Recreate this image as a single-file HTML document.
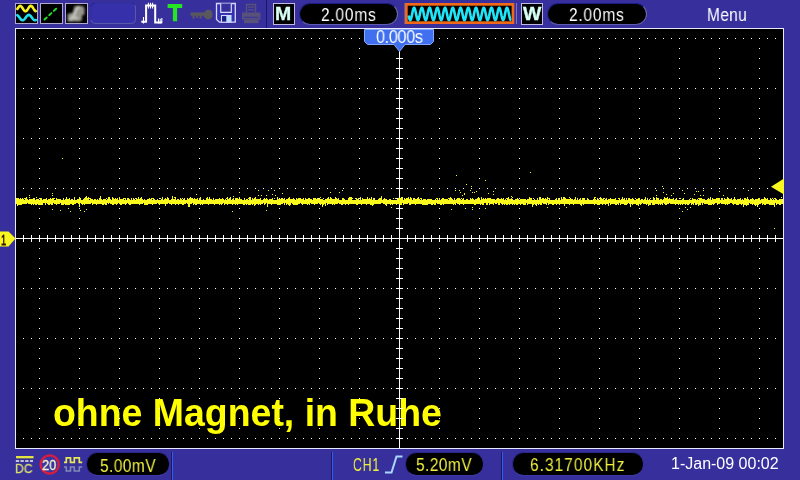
<!DOCTYPE html>
<html><head><meta charset="utf-8"><title>Scope</title>
<style>
html,body{margin:0;padding:0}
body{width:800px;height:480px;background:#37309c;overflow:hidden;position:relative;font-family:"Liberation Sans",sans-serif}
svg{position:absolute;left:0;top:0}
.t{position:absolute;white-space:nowrap;line-height:1;transform-origin:0 0;will-change:transform}
.pill{position:absolute;box-sizing:border-box;background:#000;border-radius:11.5px;border:1px solid;border-color:#1c1c88 #6c6cb0 #5c5cb0 #24248c}
</style></head><body>
<div style="position:absolute;left:15px;top:28px;width:769px;height:421px;background:#000"></div>
<div class="t" id="tnote" style="left:53.0px;top:394.4px;font-size:37.45px;font-weight:bold;color:#ffff00;transform:scaleY(1.036)">ohne Magnet, in Ruhe</div>
<svg width="800" height="480" viewBox="0 0 800 480" shape-rendering="crispEdges">
<rect x="15.5" y="28.5" width="768" height="420" fill="none" stroke="#e8e8ff"/>
<g stroke="#fff" stroke-width="1" fill="none">
<path d="M23 38.5H776" stroke-dasharray="1 7"/>
<path d="M23 88.5H776" stroke-dasharray="1 7"/>
<path d="M23 138.5H776" stroke-dasharray="1 7"/>
<path d="M23 188.5H776" stroke-dasharray="1 7"/>
<path d="M23 288.5H776" stroke-dasharray="1 7"/>
<path d="M23 338.5H776" stroke-dasharray="1 7"/>
<path d="M23 388.5H776" stroke-dasharray="1 7"/>
<path d="M23 438.5H776" stroke-dasharray="1 7"/>
<path d="M39.5 38V439" stroke-dasharray="1 9"/>
<path d="M79.5 38V439" stroke-dasharray="1 9"/>
<path d="M119.5 38V439" stroke-dasharray="1 9"/>
<path d="M159.5 38V439" stroke-dasharray="1 9"/>
<path d="M199.5 38V439" stroke-dasharray="1 9"/>
<path d="M239.5 38V439" stroke-dasharray="1 9"/>
<path d="M279.5 38V439" stroke-dasharray="1 9"/>
<path d="M319.5 38V439" stroke-dasharray="1 9"/>
<path d="M359.5 38V439" stroke-dasharray="1 9"/>
<path d="M439.5 38V439" stroke-dasharray="1 9"/>
<path d="M479.5 38V439" stroke-dasharray="1 9"/>
<path d="M519.5 38V439" stroke-dasharray="1 9"/>
<path d="M559.5 38V439" stroke-dasharray="1 9"/>
<path d="M599.5 38V439" stroke-dasharray="1 9"/>
<path d="M639.5 38V439" stroke-dasharray="1 9"/>
<path d="M679.5 38V439" stroke-dasharray="1 9"/>
<path d="M719.5 38V439" stroke-dasharray="1 9"/>
<path d="M759.5 38V439" stroke-dasharray="1 9"/>
<path d="M16 238.5H783M399.5 51V448"/>
<path d="M23.5 235v7M31.5 235v7M39.5 235v7M47.5 235v7M55.5 235v7M63.5 235v7M71.5 235v7M79.5 235v7M87.5 235v7M95.5 235v7M103.5 235v7M111.5 235v7M119.5 235v7M127.5 235v7M135.5 235v7M143.5 235v7M151.5 235v7M159.5 235v7M167.5 235v7M175.5 235v7M183.5 235v7M191.5 235v7M199.5 235v7M207.5 235v7M215.5 235v7M223.5 235v7M231.5 235v7M239.5 235v7M247.5 235v7M255.5 235v7M263.5 235v7M271.5 235v7M279.5 235v7M287.5 235v7M295.5 235v7M303.5 235v7M311.5 235v7M319.5 235v7M327.5 235v7M335.5 235v7M343.5 235v7M351.5 235v7M359.5 235v7M367.5 235v7M375.5 235v7M383.5 235v7M391.5 235v7M399.5 235v7M407.5 235v7M415.5 235v7M423.5 235v7M431.5 235v7M439.5 235v7M447.5 235v7M455.5 235v7M463.5 235v7M471.5 235v7M479.5 235v7M487.5 235v7M495.5 235v7M503.5 235v7M511.5 235v7M519.5 235v7M527.5 235v7M535.5 235v7M543.5 235v7M551.5 235v7M559.5 235v7M567.5 235v7M575.5 235v7M583.5 235v7M591.5 235v7M599.5 235v7M607.5 235v7M615.5 235v7M623.5 235v7M631.5 235v7M639.5 235v7M647.5 235v7M655.5 235v7M663.5 235v7M671.5 235v7M679.5 235v7M687.5 235v7M695.5 235v7M703.5 235v7M711.5 235v7M719.5 235v7M727.5 235v7M735.5 235v7M743.5 235v7M751.5 235v7M759.5 235v7M767.5 235v7M775.5 235v7M396 58.5h7M396 68.5h7M396 78.5h7M396 88.5h7M396 98.5h7M396 108.5h7M396 118.5h7M396 128.5h7M396 138.5h7M396 148.5h7M396 158.5h7M396 168.5h7M396 178.5h7M396 188.5h7M396 198.5h7M396 208.5h7M396 218.5h7M396 228.5h7M396 238.5h7M396 248.5h7M396 258.5h7M396 268.5h7M396 278.5h7M396 288.5h7M396 298.5h7M396 308.5h7M396 318.5h7M396 328.5h7M396 338.5h7M396 348.5h7M396 358.5h7M396 368.5h7M396 378.5h7M396 388.5h7M396 398.5h7M396 408.5h7M396 418.5h7M396 428.5h7M396 438.5h7"/>
</g>
<path d="M16.5 198V204M17.5 198V206M18.5 198V205M19.5 199V205M20.5 198V205M21.5 199V205M22.5 198V204M23.5 199V204M24.5 198V199M24.5 200V204M25.5 198V204M26.5 197V204M27.5 199V203M28.5 200V204M29.5 197V198M29.5 199V204M30.5 199V204M31.5 199V205M32.5 199V204M33.5 198V205M34.5 198V204M35.5 200V205M36.5 197V198M36.5 199V205M37.5 199V204M38.5 199V205M39.5 200V205M40.5 198V205M41.5 198V205M42.5 200V205M43.5 199V203M44.5 199V203M45.5 199V205M46.5 198V203M47.5 200V204M48.5 199V205M49.5 199V205M50.5 198V204M51.5 199V205M52.5 198V205M53.5 198V203M54.5 198V199M54.5 200V204M55.5 200V204M56.5 198V205M57.5 199V204M58.5 199V204M59.5 199V204M60.5 199V203M61.5 200V205M62.5 200V205M63.5 198V205M64.5 200V204M65.5 199V205M66.5 197V205M67.5 199V205M68.5 199V205M69.5 198V205M70.5 200V204M71.5 199V204M72.5 199V205M73.5 200V205M74.5 197V204M75.5 200V204M76.5 200V203M77.5 199V203M78.5 199V204M79.5 197V207M80.5 198V203M81.5 200V204M82.5 200V205M83.5 199V204M84.5 198V205M85.5 197V204M86.5 196V204M87.5 198V204M88.5 197V204M89.5 198V199M89.5 200V204M90.5 198V204M91.5 199V203M92.5 199V205M93.5 200V204M94.5 199V204M95.5 199V204M96.5 200V205M97.5 199V204M98.5 200V204M99.5 198V204M100.5 196V204M101.5 199V204M102.5 200V205M103.5 199V205M104.5 199V204M105.5 199V205M106.5 198V199M106.5 200V205M107.5 199V203M108.5 197V204M109.5 197V203M110.5 199V204M111.5 200V204M112.5 197V205M113.5 198V205M114.5 199V204M115.5 198V204M116.5 199V205M117.5 198V204M118.5 200V203M119.5 197V204M120.5 199V205M121.5 199V205M122.5 199V204M123.5 198V204M124.5 198V199M124.5 200V204M125.5 198V205M126.5 200V204M127.5 198V203M128.5 198V204M129.5 199V205M130.5 200V205M131.5 198V204M132.5 200V204M133.5 198V204M134.5 199V204M135.5 198V199M135.5 200V204M136.5 198V204M137.5 199V204M138.5 197V204M139.5 199V205M140.5 198V204M141.5 197V204M142.5 199V204M143.5 200V203M144.5 199V205M145.5 200V205M146.5 200V205M147.5 199V205M148.5 199V204M149.5 198V204M150.5 199V204M151.5 198V204M152.5 198V199M152.5 200V205M153.5 198V204M154.5 199V204M155.5 200V204M156.5 200V204M157.5 199V203M158.5 200V204M159.5 200V205M160.5 198V199M160.5 200V204M161.5 199V204M162.5 197V204M163.5 200V204M164.5 199V204M165.5 198V206M166.5 199V204M167.5 197V204M168.5 198V203M169.5 200V204M170.5 200V204M171.5 199V205M172.5 196V204M173.5 199V204M174.5 197V198M174.5 199V204M175.5 197V205M176.5 200V204M177.5 199V204M178.5 199V205M179.5 200V204M180.5 198V204M181.5 199V204M182.5 198V199M182.5 200V205M183.5 199V205M184.5 198V204M185.5 200V204M186.5 200V203M187.5 198V204M188.5 199V207M189.5 198V207M190.5 197V204M191.5 198V204M192.5 198V203M193.5 199V205M194.5 198V204M195.5 199V205M196.5 199V205M197.5 198V204M198.5 200V204M199.5 198V204M200.5 197V205M201.5 200V204M202.5 200V205M203.5 199V204M204.5 200V204M205.5 200V204M206.5 198V204M207.5 197V204M208.5 199V205M209.5 197V204M210.5 199V204M211.5 199V204M212.5 200V204M213.5 198V204M214.5 200V205M215.5 199V204M216.5 199V204M217.5 199V204M218.5 199V204M219.5 198V205M220.5 199V204M221.5 199V205M222.5 198V204M223.5 199V203M224.5 200V205M225.5 199V204M226.5 198V199M226.5 200V204M227.5 197V205M228.5 199V204M229.5 198V204M230.5 197V204M231.5 200V204M232.5 199V205M233.5 196V197M233.5 198V204M234.5 200V204M235.5 198V205M236.5 198V204M237.5 198V205M238.5 199V204M239.5 197V204M240.5 199V204M241.5 199V204M242.5 200V204M243.5 200V205M244.5 198V205M245.5 200V204M246.5 199V205M247.5 199V204M248.5 198V199M248.5 200V205M249.5 197V205M250.5 197V205M251.5 200V204M252.5 198V205M253.5 199V204M254.5 198V206M255.5 197V205M256.5 199V204M257.5 199V204M258.5 199V205M259.5 199V204M260.5 198V205M261.5 200V204M262.5 200V204M263.5 199V203M264.5 198V205M265.5 199V204M266.5 198V203M267.5 199V207M268.5 200V204M269.5 199V204M270.5 199V204M271.5 199V205M272.5 198V204M273.5 200V204M274.5 198V199M274.5 200V204M275.5 200V204M276.5 200V204M277.5 197V205M278.5 199V205M279.5 199V205M280.5 199V205M281.5 198V204M282.5 198V204M283.5 199V203M284.5 198V205M285.5 200V203M286.5 199V205M287.5 199V204M288.5 198V205M289.5 197V206M290.5 199V205M291.5 199V203M292.5 199V204M293.5 198V205M294.5 199V205M295.5 200V205M296.5 198V205M297.5 199V205M298.5 198V204M299.5 198V204M300.5 198V203M301.5 199V204M302.5 199V205M303.5 198V204M304.5 200V204M305.5 198V204M306.5 199V204M307.5 199V205M308.5 198V204M309.5 198V205M310.5 199V203M311.5 199V204M312.5 200V204M313.5 198V204M314.5 198V205M315.5 198V204M316.5 199V204M317.5 198V204M318.5 198V203M319.5 199V204M320.5 197V198M320.5 199V205M321.5 199V204M322.5 199V207M323.5 198V199M323.5 200V205M324.5 200V204M325.5 199V206M326.5 199V203M327.5 198V205M328.5 197V204M329.5 199V204M330.5 197V204M331.5 198V204M332.5 199V205M333.5 199V204M334.5 199V205M335.5 197V204M336.5 198V204M337.5 199V204M338.5 198V203M339.5 200V204M340.5 200V204M341.5 200V205M342.5 198V205M343.5 198V204M344.5 199V204M345.5 200V205M346.5 200V204M347.5 200V204M348.5 198V205M349.5 197V204M350.5 197V204M351.5 197V204M352.5 198V199M352.5 200V204M353.5 200V204M354.5 200V204M355.5 198V199M355.5 200V204M356.5 198V205M357.5 199V205M358.5 198V204M359.5 200V204M360.5 197V204M361.5 200V205M362.5 198V204M363.5 199V204M364.5 199V204M365.5 199V204M366.5 199V205M367.5 197V204M368.5 199V204M369.5 198V204M370.5 199V205M371.5 197V205M372.5 200V206M373.5 198V205M374.5 198V204M375.5 200V204M376.5 200V204M377.5 200V204M378.5 199V204M379.5 198V204M380.5 198V204M381.5 196V203M382.5 200V203M383.5 199V204M384.5 198V204M385.5 199V205M386.5 199V206M387.5 200V204M388.5 200V204M389.5 199V204M390.5 199V205M391.5 200V204M392.5 200V205M393.5 198V199M393.5 200V204M394.5 200V204M395.5 198V199M395.5 200V204M396.5 200V205M397.5 199V204M398.5 198V204M399.5 198V204M400.5 198V205M401.5 197V205M402.5 197V203M403.5 200V205M404.5 198V204M405.5 199V204M406.5 198V204M407.5 198V204M408.5 197V203M409.5 199V205M410.5 197V205M411.5 198V204M412.5 200V204M413.5 198V204M414.5 198V204M415.5 199V205M416.5 199V204M417.5 198V204M418.5 197V204M419.5 199V204M420.5 198V199M420.5 200V204M421.5 198V204M422.5 200V205M423.5 199V205M424.5 199V205M425.5 199V205M426.5 200V205M427.5 199V205M428.5 199V204M429.5 199V204M430.5 199V204M431.5 199V205M432.5 200V205M433.5 200V204M434.5 200V205M435.5 199V205M436.5 198V199M436.5 200V203M437.5 198V204M438.5 200V204M439.5 198V204M440.5 200V205M441.5 199V205M442.5 198V204M443.5 198V205M444.5 199V204M445.5 199V204M446.5 199V204M447.5 199V204M448.5 198V199M448.5 200V204M449.5 198V204M450.5 197V204M451.5 198V204M452.5 199V204M453.5 200V205M454.5 198V204M455.5 200V205M456.5 199V203M457.5 198V204M458.5 198V204M459.5 198V205M460.5 199V204M461.5 198V199M461.5 200V204M462.5 199V204M463.5 198V205M464.5 200V204M465.5 200V204M466.5 199V204M467.5 199V204M468.5 200V204M469.5 200V204M470.5 198V204M471.5 199V204M472.5 198V204M473.5 199V204M474.5 200V205M475.5 199V205M476.5 199V204M477.5 198V204M478.5 197V204M479.5 198V204M480.5 200V205M481.5 197V204M482.5 199V205M483.5 198V205M484.5 199V203M485.5 198V203M486.5 199V205M487.5 198V205M488.5 198V203M489.5 198V205M490.5 198V204M491.5 199V204M492.5 199V204M493.5 199V205M494.5 199V203M495.5 200V204M496.5 199V204M497.5 198V203M498.5 198V205M499.5 199V205M500.5 199V203M501.5 198V204M502.5 199V205M503.5 198V204M504.5 200V205M505.5 199V204M506.5 198V199M506.5 200V205M507.5 198V205M508.5 197V204M509.5 199V205M510.5 199V204M511.5 196V197M511.5 198V204M512.5 197V198M512.5 199V205M513.5 200V204M514.5 200V205M515.5 199V204M516.5 199V205M517.5 198V205M518.5 199V204M519.5 200V204M520.5 199V205M521.5 199V204M522.5 199V204M523.5 199V205M524.5 199V205M525.5 199V205M526.5 200V203M527.5 199V205M528.5 199V204M529.5 197V204M530.5 198V204M531.5 198V204M532.5 200V207M533.5 198V199M533.5 200V205M534.5 199V204M535.5 200V205M536.5 200V206M537.5 198V204M538.5 200V205M539.5 197V204M540.5 197V205M541.5 199V205M542.5 198V203M543.5 198V204M544.5 199V204M545.5 198V204M546.5 199V205M547.5 197V203M548.5 198V199M548.5 200V205M549.5 198V204M550.5 200V204M551.5 200V204M552.5 200V205M553.5 200V205M554.5 200V204M555.5 199V204M556.5 198V205M557.5 200V204M558.5 198V204M559.5 199V205M560.5 200V204M561.5 197V204M562.5 199V204M563.5 197V204M564.5 197V206M565.5 198V204M566.5 199V204M567.5 199V204M568.5 199V204M569.5 197V198M569.5 199V205M570.5 198V204M571.5 199V204M572.5 199V204M573.5 200V205M574.5 199V204M575.5 197V204M576.5 200V204M577.5 198V204M578.5 200V204M579.5 199V204M580.5 198V205M581.5 200V206M582.5 198V204M583.5 198V205M584.5 198V204M585.5 200V204M586.5 200V204M587.5 198V204M588.5 199V204M589.5 200V204M590.5 200V204M591.5 200V204M592.5 200V204M593.5 199V204M594.5 197V205M595.5 197V198M595.5 199V204M596.5 200V204M597.5 198V205M598.5 199V205M599.5 200V205M600.5 197V204M601.5 198V204M602.5 199V205M603.5 198V204M604.5 198V199M604.5 200V204M605.5 199V205M606.5 198V204M607.5 200V204M608.5 199V206M609.5 199V203M610.5 198V205M611.5 199V204M612.5 199V204M613.5 199V204M614.5 199V204M615.5 198V205M616.5 200V205M617.5 200V204M618.5 198V199M618.5 200V205M619.5 198V203M620.5 200V205M621.5 199V204M622.5 197V204M623.5 199V204M624.5 198V205M625.5 200V205M626.5 198V205M627.5 200V204M628.5 198V203M629.5 198V204M630.5 199V207M631.5 199V204M632.5 198V205M633.5 199V204M634.5 200V204M635.5 198V199M635.5 200V204M636.5 199V205M637.5 199V205M638.5 198V206M639.5 198V204M640.5 200V205M641.5 199V204M642.5 199V203M643.5 200V204M644.5 199V204M645.5 197V204M646.5 200V205M647.5 198V204M648.5 200V206M649.5 199V205M650.5 198V199M650.5 200V205M651.5 200V203M652.5 200V205M653.5 197V205M654.5 198V205M655.5 200V204M656.5 197V204M657.5 198V204M658.5 198V205M659.5 200V204M660.5 199V205M661.5 199V204M662.5 200V205M663.5 199V203M664.5 197V204M665.5 198V205M666.5 198V205M667.5 197V204M668.5 199V204M669.5 198V203M670.5 199V204M671.5 199V204M672.5 199V204M673.5 198V204M674.5 200V204M675.5 199V205M676.5 198V204M677.5 200V204M678.5 200V205M679.5 200V204M680.5 198V199M680.5 200V205M681.5 200V204M682.5 199V205M683.5 198V204M684.5 200V204M685.5 200V205M686.5 200V204M687.5 200V205M688.5 200V205M689.5 199V204M690.5 198V199M690.5 200V203M691.5 200V205M692.5 198V204M693.5 199V205M694.5 199V203M695.5 199V205M696.5 200V205M697.5 199V204M698.5 198V199M698.5 200V206M699.5 198V205M700.5 198V205M701.5 198V203M702.5 199V205M703.5 199V203M704.5 199V204M705.5 200V204M706.5 200V204M707.5 199V204M708.5 198V205M709.5 199V205M710.5 197V205M711.5 200V205M712.5 198V204M713.5 199V205M714.5 199V204M715.5 199V203M716.5 198V203M717.5 198V205M718.5 198V204M719.5 198V204M720.5 200V203M721.5 198V204M722.5 198V204M723.5 200V204M724.5 198V204M725.5 199V205M726.5 199V204M727.5 197V205M728.5 198V204M729.5 199V204M730.5 199V203M731.5 198V203M732.5 200V204M733.5 199V205M734.5 197V204M735.5 199V204M736.5 200V205M737.5 199V205M738.5 199V205M739.5 199V204M740.5 198V204M741.5 200V205M742.5 199V204M743.5 200V207M744.5 198V205M745.5 198V205M746.5 199V206M747.5 197V205M748.5 199V205M749.5 200V203M750.5 199V204M751.5 199V204M752.5 198V205M753.5 199V204M754.5 200V205M755.5 199V206M756.5 199V205M757.5 199V207M758.5 198V205M759.5 198V204M760.5 200V204M761.5 199V203M762.5 199V205M763.5 199V204M764.5 197V205M765.5 198V205M766.5 199V204M767.5 198V204M768.5 200V204M769.5 200V205M770.5 198V205M771.5 199V205M772.5 198V199M772.5 200V205M773.5 199V205M774.5 198V199M774.5 200V207M775.5 198V203M776.5 199V205M777.5 200V204M778.5 200V204M779.5 199V205M780.5 199V205M781.5 197V198M781.5 199V204M782.5 199V204M258.5 195v1M275.5 195v1M261.5 195v1M268.5 190v1M274.5 190v1M272.5 194v1M266.5 195v1M258.5 190v1M470.5 190v1M460.5 192v1M472.5 192v1M474.5 192v1M464.5 193v1M493.5 194v1M476.5 191v1M455.5 190v1M459.5 190v1M462.5 195v1M493.5 191v1M488.5 193v1M684.5 193v1M694.5 194v1M696.5 191v1M703.5 195v1M703.5 190v1M656.5 190v1M700.5 195v1M656.5 195v1M698.5 191v1M682.5 190v1M666.5 194v1M673.5 193v1M671.5 195v1M663.5 192v1M339.5 192v1M330.5 192v1M342.5 190v1M52.5 193v1M52.5 195v1M80.5 210v1M84.5 211v1M86.5 209v1M68.5 208v1M60.5 210v1M472.5 207v1M465.5 208v1M472.5 209v1M690.5 207v1M687.5 209v1M682.5 211v1M685.5 207v1M52.5 209v1M451.5 209v1M391.5 207v1M566.5 207v1M485.5 208v1M232.5 211v1M70.5 211v1M266.5 210v1M547.5 207v1M679.5 208v1M239.5 192v1M29.5 195v1M282.5 193v1M748.5 190v1M196.5 194v1M464.5 194v1M719.5 191v1M723.5 195v1M62.5 158v1M456.5 175v1M530.5 172v1M485.5 180v1M466.5 184v1M471.5 186v1M774.5 228v1M662.5 186v1" stroke="#f8f81c" stroke-width="1" fill="none"/>
<!-- trigger time marker -->
<g shape-rendering="geometricPrecision">
<path d="M364.5 29.5H433.5V41.5L430.5 44.5H405L399.5 51.5L394 44.5H367.5L364.5 41.5Z" fill="#4070f0" stroke="#88a8ff"/>
<path d="M0 231.5H8.5L15.5 238.5L8.5 246.5H0Z" fill="#f8f820"/>
<path d="M784 178.400V194.600L771 186.700Z" fill="#f8f820"/>
</g>
<!-- top icons -->
<g>
<rect x="15.5" y="3.5" width="22" height="20" fill="#000" stroke="#b0a8d0"/>
<rect x="40.5" y="3.5" width="22" height="20" fill="#000" stroke="#b0a8d0"/>
<rect x="65.5" y="3.5" width="22" height="20" fill="#000" stroke="#b0a8d0"/>
<g shape-rendering="geometricPrecision" fill="none" stroke-width="2.2" stroke-linecap="round">
<path d="M17.3 9.00L17.8 8.20L18.3 7.44L18.8 6.78L19.3 6.28L19.8 5.98L20.3 5.90L20.8 6.07L21.3 6.45L21.8 7.03L22.3 7.74L22.8 8.52L23.3 9.31L23.8 10.04L24.3 10.65L24.8 11.07L25.3 11.28L25.8 11.26L26.3 11.00L26.8 10.54L27.3 9.90L27.8 9.16L28.3 8.36L28.8 7.59L29.3 6.90L29.8 6.36L30.3 6.02L30.8 5.90L31.3 6.02L31.8 6.36L32.3 6.90L32.8 7.59L33.3 8.36L33.8 9.16L34.3 9.90L34.8 10.54L35.3 11.00L35.8 11.26" stroke="#f8f020" stroke-width="2.6"/>
<path d="M17.3 15.18L17.8 15.55L18.3 16.06L18.8 16.66L19.3 17.33L19.8 18.01L20.3 18.66L20.8 19.25L21.3 19.74L21.8 20.08L22.3 20.27L22.8 20.29L23.3 20.13L23.8 19.82L24.3 19.36L24.8 18.79L25.3 18.14L25.8 17.46L26.3 16.79L26.8 16.17L27.3 15.64L27.8 15.24L28.3 14.99L28.8 14.90L29.3 14.99L29.8 15.24L30.3 15.64L30.8 16.17L31.3 16.79L31.8 17.46L32.3 18.14L32.8 18.79L33.3 19.36L33.8 19.82L34.3 20.13L34.8 20.29L35.3 20.27L35.8 20.08" stroke="#20e0f0" stroke-width="2.6"/>
<path d="M44.500 19.500L57.500 7.500" stroke="#20d828" stroke-width="2" stroke-dasharray="3 3.4"/>
</g>
<g shape-rendering="geometricPrecision">
<filter id="bl" x="-20%" y="-20%" width="140%" height="140%"><feGaussianBlur stdDeviation="0.8"/></filter>
<path d="M67.500 21.500V14L73 12.500L74.500 6H83L84.500 8V14.500L82 15.500V20L80 21.500Z" fill="#94948c" filter="url(#bl)"/>
<path d="M70 20L74.500 15L76 10L79.500 6.500M72 18H78" stroke="#d4d4cc" stroke-width="2.200" fill="none" filter="url(#bl)" opacity="0.85"/>
</g>
<rect x="91" y="3" width="44.5" height="20.5" rx="4" fill="#3630aa" stroke="#5a58a8" shape-rendering="geometricPrecision"/><path d="M91 19.5V7Q91 3 95 3H131.500Q134.500 3 135.200 5" fill="none" stroke="#1c1c9a" shape-rendering="geometricPrecision"/>
</g>
<!-- pulse icon -->
<g shape-rendering="geometricPrecision" fill="none" stroke="#fff">
<path d="M141.300 21.800H146.100V5.600H155.200V22.400H162.200" stroke-width="2"/>
<path d="M143.500 17v6.500M148.400 2.800v5.600M150.500 2.800v5.600M152.600 2.800v5.600M158.500 18.500v5M160.200 18.800v4.700M161.800 18v4.500" stroke-width="1.100"/>
</g>
<!-- T -->
<path d="M167.600 4H182.200V8.100H177.100V21.200H172.900V8.100H167.600Z" fill="#24e424" shape-rendering="geometricPrecision"/>
<!-- key -->
<g fill="#5a585c" shape-rendering="geometricPrecision">
<rect x="190.5" y="12.5" width="14" height="3.2"/>
<rect x="192.5" y="15" width="2" height="3.6"/><rect x="196" y="15" width="2" height="3"/><rect x="199.500" y="15" width="2" height="3.600"/>
<path d="M202.500 14L206.500 10Q212.500 9 212.500 14.500Q212.500 20 206.500 19.200L202.500 15.500Z"/>
</g>
<!-- floppy -->
<g shape-rendering="geometricPrecision">
<path d="M216.500 3.500H235.300V22.200H219.500L216.500 19.500Z" fill="#3232b0" stroke="#d8d8ff" stroke-width="1.300"/>
<path d="M220.700 3.500V12.300H231.300V3.500" fill="#37309c" stroke="#d8d8ff" stroke-width="1.200"/>
<rect x="221.500" y="15.500" width="9.500" height="6.700" fill="#1c1c84" stroke="#d8d8ff" stroke-width="1.100"/>
<rect x="226.300" y="16" width="4.700" height="6" fill="#b8e0ff"/>
</g>
<!-- printer -->
<g fill="#58527a" shape-rendering="geometricPrecision">
<path d="M246.500 12.500V4.500H255.500V12.500" fill="none" stroke="#58527a" stroke-width="1.400"/>
<rect x="248" y="6.500" width="6" height="1.200"/><rect x="248" y="9.300" width="6" height="1.200"/>
<rect x="242" y="12.500" width="18.500" height="7"/>
<rect x="244" y="19.500" width="14.500" height="3.700"/>
<rect x="244" y="16.800" width="14.500" height="1" fill="#37309c"/>
</g>
<rect x="266" y="0" width="1" height="28" fill="#18186a"/>
<!-- M box, W box -->
<rect x="273.5" y="3.5" width="21" height="21" fill="#000" stroke="#c0b8e4"/>
<rect x="521.5" y="3.5" width="21" height="21" fill="#000" stroke="#c0b8e4"/>
<!-- orange box -->
<rect x="406.35" y="4.35" width="106.6" height="18.3" fill="#000" stroke="#f06818" stroke-width="2.7" shape-rendering="geometricPrecision"/><rect x="515.5" y="3" width="1" height="21" fill="#7c78b8"/><rect x="404" y="3" width="1" height="21" fill="#5c58a8"/>
<path d="M408.6 15.42L409.1 17.67L409.6 19.31L410.1 20.07L410.6 19.82L411.1 18.62L411.6 16.65L412.1 14.23L412.6 11.76L413.1 9.63L413.6 8.20L414.1 7.70L414.6 8.20L415.1 9.63L415.6 11.76L416.1 14.23L416.6 16.65L417.1 18.62L417.6 19.82L418.1 20.07L418.6 19.31L419.1 17.67L419.6 15.42L420.1 12.92L420.6 10.58L421.1 8.79L421.6 7.82L422.1 7.84L422.6 8.84L423.1 10.67L423.6 13.02L424.1 15.52L424.6 17.75L425.1 19.36L425.6 20.08L426.1 19.79L426.6 18.55L427.1 16.55L427.6 14.13L428.1 11.66L428.6 9.56L429.1 8.16L429.6 7.70L430.1 8.24L430.6 9.71L431.1 11.85L431.6 14.33L432.1 16.73L432.6 18.68L433.1 19.85L433.6 20.05L434.1 19.26L434.6 17.59L435.1 15.32L435.6 12.82L436.1 10.50L436.6 8.73L437.1 7.80L437.6 7.86L438.1 8.90L438.6 10.76L439.1 13.12L439.6 15.61L440.1 17.83L440.6 19.40L441.1 20.08L441.6 19.76L442.1 18.48L442.6 16.46L443.1 14.03L443.6 11.57L444.1 9.49L444.6 8.13L445.1 7.70L445.6 8.29L446.1 9.78L446.6 11.95L447.1 14.43L447.6 16.82L448.1 18.75L448.6 19.88L449.1 20.04L449.6 19.21L450.1 17.51L450.6 15.22L451.1 12.72L451.6 10.42L452.1 8.67L452.6 7.78L453.1 7.88L453.6 8.96L454.1 10.84L454.6 13.22L455.1 15.71L455.6 17.90L456.1 19.45L456.6 20.09L457.1 19.73L457.6 18.42L458.1 16.37L458.6 13.93L459.1 11.48L459.6 9.42L460.1 8.09L460.6 7.71L461.1 8.33L461.6 9.86L462.1 12.04L462.6 14.53L463.1 16.91L463.6 18.81L464.1 19.90L464.6 20.03L465.1 19.15L465.6 17.43L466.1 15.12L466.6 12.63L467.1 10.33L467.6 8.62L468.1 7.77L468.6 7.91L469.1 9.02L469.6 10.93L470.1 13.32L470.6 15.81L471.1 17.98L471.6 19.49L472.1 20.09L472.6 19.69L473.1 18.35L473.6 16.28L474.1 13.82L474.6 11.38L475.1 9.35L475.6 8.06L476.1 7.71L476.6 8.37L477.1 9.93L477.6 12.14L478.1 14.63L478.6 17.00L479.1 18.87L479.6 19.93L480.1 20.01L480.6 19.10L481.1 17.34L481.6 15.03L482.1 12.53L482.6 10.25L483.1 8.57L483.6 7.75L484.1 7.93L484.6 9.09L485.1 11.02L485.6 13.42L486.1 15.90L486.6 18.06L487.1 19.53L487.6 20.10L488.1 19.65L488.6 18.28L489.1 16.19L489.6 13.72L490.1 11.29L490.6 9.28L491.1 8.02L491.6 7.72L492.1 8.42L492.6 10.01L493.1 12.23L493.6 14.73L494.1 17.09L494.6 18.93L495.1 19.95L495.6 19.99L496.1 19.04L496.6 17.26L497.1 14.93L497.6 12.43L498.1 10.17L498.6 8.52L499.1 7.74L499.6 7.96L500.1 9.15L500.6 11.11L501.1 13.52L501.6 16.00L502.1 18.13L502.6 19.58L503.1 20.10L503.6 19.62L504.1 18.20L504.6 16.09L505.1 13.62L505.6 11.20L506.1 9.22L506.6 7.99L507.1 7.73L507.6 8.47L508.1 10.09L508.6 12.33L509.1 14.83L509.6 17.17L510.1 18.99L510.6 19.97L511.1 19.97" fill="none" stroke="#20e4f8" stroke-width="2.6" stroke-linejoin="round" shape-rendering="geometricPrecision"/>
<!-- bottom bar -->
<g>
<rect x="16" y="456" width="17.5" height="2.6" fill="#e4e440" shape-rendering="geometricPrecision"/>
<rect x="16" y="458.6" width="17.5" height="0.8" fill="#282880" shape-rendering="geometricPrecision"/>
<path d="M15.800 461H33" stroke="#f4f4e8" stroke-width="1.3" stroke-dasharray="3.3 1.4" shape-rendering="geometricPrecision"/>
<circle cx="49.7" cy="464.5" r="9.1" fill="#3a34a4" stroke="#dc1c3c" stroke-width="2.4" shape-rendering="geometricPrecision"/>
<path d="M64 462.3H66.300V457.900H70.500V462.300H74.300V457.900H79.300V462.300H82.200" fill="none" stroke="#e8e858" stroke-width="1.7" shape-rendering="geometricPrecision"/>
<path d="M64 467H66.300V471H70.500V467H74.300V471H79.300V467H82.200" fill="none" stroke="#8088b4" stroke-width="1.6" shape-rendering="geometricPrecision"/>
<rect x="171" y="452" width="1" height="28" fill="#18186a"/><rect x="172" y="452" width="1" height="28" fill="#3060f0"/>
<rect x="331" y="452" width="1" height="28" fill="#18186a"/><rect x="332" y="452" width="1" height="28" fill="#3060f0"/>
<rect x="501" y="452" width="1" height="28" fill="#18186a"/><rect x="502" y="452" width="1" height="28" fill="#3060f0"/>
<path d="M385 472.500H391.500L396.500 456.500H402.500" fill="none" stroke="#a8d8ff" stroke-width="2" shape-rendering="geometricPrecision"/>
</g>
</svg>
<div class="pill" style="left:298.5px;top:3px;width:99.5px;height:22px"></div>
<div class="pill" style="left:547px;top:3px;width:100px;height:22px"></div>
<div class="pill" style="border-color:#2a2890 #34309c #3c38a4 #2a2890;left:86px;top:452px;width:83.500px;height:23.600px"></div>
<div class="pill" style="border-color:#2a2890 #34309c #3c38a4 #2a2890;left:404.500px;top:452px;width:79px;height:23.600px"></div>
<div class="pill" style="border-color:#2a2890 #34309c #3c38a4 #2a2890;left:511.500px;top:452px;width:132px;height:23.600px"></div>

<div class="t" id="t1" style="left:321.23px;top:5.76px;font-size:18px;color:#fff;letter-spacing:0.92px;transform:scaleX(0.86)">2.00ms</div>
<div class="t" id="t2" style="left:569.23px;top:5.76px;font-size:18px;color:#fff;letter-spacing:0.92px;transform:scaleX(0.86)">2.00ms</div>
<div class="t" id="tv1" style="left:99.88px;top:456.76px;font-size:18px;color:#f0f040;letter-spacing:0.52px;transform:scaleX(0.86)">5.00mV</div>
<div class="t" id="tv2" style="left:415.88px;top:455.76px;font-size:18px;color:#f0f040;letter-spacing:0.52px;transform:scaleX(0.86)">5.20mV</div>
<div class="t" id="tf" style="left:529.73px;top:455.76px;font-size:18px;color:#f0f040;letter-spacing:1.19px;transform:scaleX(0.86)">6.31700KHz</div>
<div class="t" id="tmenu" style="left:707.26px;top:5.76px;font-size:18px;color:#fff;letter-spacing:0.40px;transform:scaleX(0.86)">Menu</div>
<div class="t" id="ttime" style="left:376.01px;top:28.69px;font-size:17.5px;color:#fff;letter-spacing:-0.41px;transform:scaleX(0.93)">0.000s</div>
<div class="t" id="tch1" style="left:352.89px;top:455.76px;font-size:18px;color:#f0f040;letter-spacing:1.24px;transform:scaleX(0.68)">CH1</div>
<div class="t" id="tM" style="left:275.19px;top:5.34px;font-size:18.5px;color:#d8fff4;font-weight:bold;transform:scaleX(1.05);-webkit-text-stroke:0.35px #d8fff4">M</div>
<div class="t" id="tW" style="left:522.52px;top:5.34px;font-size:18.5px;color:#d8fff4;font-weight:bold;transform:scaleX(1.05);-webkit-text-stroke:0.35px #d8fff4">W</div>
<div class="t" id="tch" style="left:0.7px;top:232.0px;font-size:15px;color:#3a1800;-webkit-text-stroke:0.8px #3a1800;transform:scaleX(0.6)">1</div>
<div class="t" id="tdc" style="left:15.44px;top:463.12px;font-size:12.5px;color:#d8dc70;letter-spacing:0.12px;transform:scaleX(0.96);-webkit-text-stroke:0.3px #d8dc70">DC</div>
<div class="t" id="t20" style="left:41.75px;top:457.30px;font-size:15px;color:#f4f4c8;letter-spacing:-0.04px;transform:scaleX(0.86);-webkit-text-stroke:0.3px #f4f4c8">20</div>
<div class="t" id="tdate" style="left:670.5px;top:455.5px;font-size:16px;color:#fff">1-Jan-09 00:02</div>
</body></html>
